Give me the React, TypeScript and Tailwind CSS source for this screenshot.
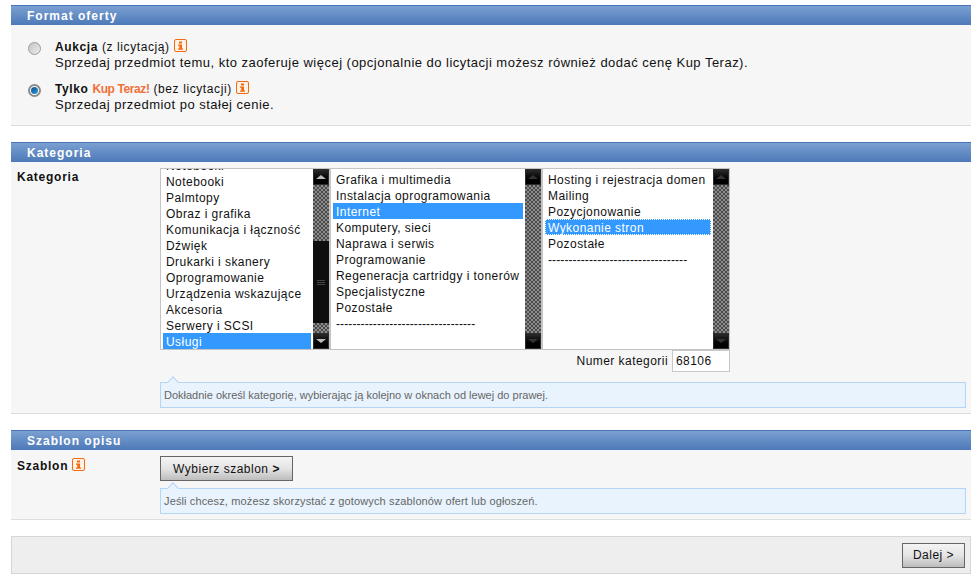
import type { ReactNode } from 'react';

const checker =
  'bg-[repeating-conic-gradient(#4a4a4a_0_25%,#8c8c8c_0_50%)] bg-[length:4px_4px]';

function InfoIcon() {
  return (
    <svg width="13" height="13" viewBox="0 0 13 13" className="inline-block align-[-1px]">
      <rect x="0.5" y="0.5" width="12" height="12" rx="1.5" fill="#fff3e6" stroke="#f26a13" />
      <rect x="5" y="2.5" width="3" height="2" fill="#f26a13" />
      <path d="M4 5.5h4v4h1v1.2H4V9.5h1.3V6.7H4z" fill="#f26a13" />
    </svg>
  );
}

function Radio({ checked }: { checked?: boolean }) {
  return (
    <span
      className={
        checked
          ? 'flex h-[13px] w-[13px] items-center justify-center rounded-full border-2 border-[#8a8a8a] bg-white'
          : 'flex h-[13px] w-[13px] items-center justify-center rounded-full border border-[#9a9a9a] bg-gradient-to-br from-[#c4c4c4] to-[#ececec]'
      }
    >
      {checked && (
        <span className="h-[7px] w-[7px] rounded-full bg-gradient-to-br from-[#0d4f86] to-[#2c9ade]" />
      )}
    </span>
  );
}

function SectionHeader({ children }: { children: ReactNode }) {
  return (
    <div className="flex h-[20px] items-center border-t border-[#4a72b8] bg-gradient-to-b from-[#7ba0d2] to-[#4d79b8] pl-4 text-xs font-bold tracking-[1px] text-white">
      {children}
    </div>
  );
}

function ScrollButton({ down, dim }: { down?: boolean; dim?: boolean }) {
  const color = dim ? 'border-[#333]' : 'border-[#bbb]';
  return (
    <div className="flex h-[16px] items-center justify-center border border-[#2b2b2b] bg-gradient-to-b from-[#2a2a2a] to-black">
      <span
        className={
          down
            ? `h-0 w-0 border-x-[5px] border-t-[4px] border-x-transparent ${color}`
            : `h-0 w-0 border-x-[5px] border-b-[4px] border-x-transparent ${color}`
        }
      />
    </div>
  );
}

function Scrollbar({ thumb, dim }: { thumb?: boolean; dim?: boolean }) {
  return (
    <div className="flex h-full w-[16px] shrink-0 flex-col">
      <ScrollButton dim={dim} />
      {thumb ? (
        <>
          <div className={`h-[56px] ${checker}`} />
          <div className="flex h-[82px] flex-col items-center justify-center gap-[1px] bg-[#0e0e0e]">
            <span className="h-px w-2 bg-[#444]" />
            <span className="h-px w-2 bg-[#444]" />
            <span className="h-px w-2 bg-[#444]" />
          </div>
          <div className={`flex-1 ${checker}`} />
        </>
      ) : (
        <div className={`flex-1 ${checker}`} />
      )}
      <ScrollButton down dim={dim} />
    </div>
  );
}

function ListBox({
  items,
  selected,
  focused,
  width,
  thumb,
  dim,
  scrolled,
}: {
  items: string[];
  selected: string;
  focused?: boolean;
  width: string;
  thumb?: boolean;
  dim?: boolean;
  scrolled?: boolean;
}) {
  return (
    <div className={`flex h-full shrink-0 ${width}`}>
      <div className="min-w-0 flex-1 overflow-hidden bg-white py-[2px] pl-[2px] pr-[2px]">
        <div className={scrolled ? '-mt-[14px]' : ''}>
          {items.map((item) => (
            <div
              key={item}
              className={
                item === selected
                  ? `h-[16px] whitespace-nowrap bg-[#3399ff] pl-[3px] leading-[18px] text-white ${
                      focused ? 'outline-1 -outline-offset-1 outline-dotted outline-white' : ''
                    }`
                  : item.startsWith('---')
                    ? 'h-[16px] whitespace-nowrap pl-[3px] leading-[18px] tracking-[0.1px] text-[#111]'
                    : 'h-[16px] whitespace-nowrap pl-[3px] leading-[18px] text-[#111]'
              }
            >
              {item}
            </div>
          ))}
        </div>
      </div>
      <Scrollbar thumb={thumb} dim={dim} />
    </div>
  );
}

function Hint({ children }: { children: ReactNode }) {
  return (
    <div className="relative ml-[149px] mr-[5px] flex h-[26px] items-center border border-[#b5d5f5] bg-[#e8f3fd] pl-[3px] text-[11px] tracking-normal text-[#666]">
      <span className="absolute -top-[5px] left-[8px] h-[8px] w-[8px] rotate-45 border-l border-t border-[#b5d5f5] bg-[#e8f3fd]" />
      {children}
    </div>
  );
}

function ActionButton({ children, className }: { children: ReactNode; className: string }) {
  return (
    <button
      className={`border border-[#666] bg-gradient-to-b from-[#f4f4f4] via-[#e4e4e4] to-[#bdbdbd] tracking-[0.5px] text-[#111] ${className}`}
    >
      {children}
    </button>
  );
}

const list1 = [
  'Notebooki ',
  'Notebooki',
  'Palmtopy',
  'Obraz i grafika',
  'Komunikacja i łączność',
  'Dźwięk',
  'Drukarki i skanery',
  'Oprogramowanie',
  'Urządzenia wskazujące',
  'Akcesoria',
  'Serwery i SCSI',
  'Usługi',
];

const list2 = [
  'Grafika i multimedia',
  'Instalacja oprogramowania',
  'Internet',
  'Komputery, sieci',
  'Naprawa i serwis',
  'Programowanie',
  'Regeneracja cartridgy i tonerów',
  'Specjalistyczne',
  'Pozostałe',
  '----------------------------------',
];

const list3 = [
  'Hosting i rejestracja domen',
  'Mailing',
  'Pozycjonowanie',
  'Wykonanie stron',
  'Pozostałe',
  '----------------------------------',
];

export default function App() {
  return (
    <div className="h-[585px] w-[979px] overflow-hidden bg-white pl-[11px] pr-2 pt-[5px] font-['Liberation_Sans',Arial,sans-serif] text-xs tracking-[0.45px] text-[#111]">
      {/* Format oferty */}
      <SectionHeader>Format oferty</SectionHeader>
      <div className="h-[101px] border-b border-[#dedede] bg-[#f6f6f6] pt-[14px]">
        <div className="flex h-[42px]">
          <div className="flex w-[44px] justify-end pt-[3px] pr-[14px]">
            <Radio />
          </div>
          <div className="leading-[16px] tracking-[0.6px]">
            <div>
              <b>Aukcja</b> (z licytacją) <InfoIcon />
            </div>
            <div className="text-[13px] tracking-[0.48px]">
              Sprzedaj przedmiot temu, kto zaoferuje więcej (opcjonalnie do licytacji możesz również dodać cenę Kup Teraz).
            </div>
          </div>
        </div>
        <div className="flex">
          <div className="flex w-[44px] justify-end pt-[3px] pr-[14px]">
            <Radio checked />
          </div>
          <div className="leading-[16px] tracking-[0.6px]">
            <div>
              <b>Tylko</b> <b className="font-bold tracking-[-0.4px] text-[#f0703a]">Kup Teraz!</b> (bez licytacji) <InfoIcon />
            </div>
            <div className="text-[13px] tracking-[0.48px]">Sprzedaj przedmiot po stałej cenie.</div>
          </div>
        </div>
      </div>

      {/* Kategoria */}
      <div className="mt-[16px]">
        <SectionHeader>Kategoria</SectionHeader>
        <div className="h-[252px] border-b border-[#dedede] bg-[#f6f6f6] pt-[6px]">
          <div className="flex">
            <div className="w-[149px] pl-[6px] pt-px font-bold tracking-[0.75px]">Kategoria</div>
            <div className="flex h-[182px] w-[570px] divide-x-2 divide-[#c4c4c4] border border-[#c4c4c4]">
              <ListBox items={list1} selected="Usługi" width="w-[170px]" thumb scrolled />
              <ListBox items={list2} selected="Internet" width="w-[212px]" dim />
              <ListBox items={list3} selected="Wykonanie stron" focused width="w-[186px]" dim />
            </div>
          </div>
          <div className="flex h-[22px] items-center justify-end pr-[241px]">
            <span className="mr-[4px]">Numer kategorii</span>
            <span className="flex h-[22px] w-[58px] items-center border border-[#c8c8c8] bg-white pl-[3px]">68106</span>
          </div>
          <div className="mt-[10px]">
            <Hint>Dokładnie określ kategorię, wybierając ją kolejno w oknach od lewej do prawej.</Hint>
          </div>
        </div>
      </div>

      {/* Szablon opisu */}
      <div className="mt-[16px]">
        <SectionHeader>Szablon opisu</SectionHeader>
        <div className="h-[70px] border-b border-[#dedede] bg-[#f6f6f6] pt-[6px]">
          <div className="flex">
            <div className="w-[149px] pl-[6px] pt-[2px] font-bold tracking-[0.75px]">
              Szablon <InfoIcon />
            </div>
            <ActionButton className="h-[25px] w-[133px]">
              Wybierz szablon <b>&gt;</b>
            </ActionButton>
          </div>
          <div className="mt-[7px]">
            <Hint>
              <span className="tracking-[0.13px]">Jeśli chcesz, możesz skorzystać z gotowych szablonów ofert lub ogłoszeń.</span>
            </Hint>
          </div>
        </div>
      </div>

      {/* Dalej */}
      <div className="mt-[16px] flex h-[38px] items-center justify-end border border-[#d6d6d6] bg-[#eeeeee] pr-[5px]">
        <ActionButton className="h-[25px] w-[63px]">Dalej &gt;</ActionButton>
      </div>
    </div>
  );
}
